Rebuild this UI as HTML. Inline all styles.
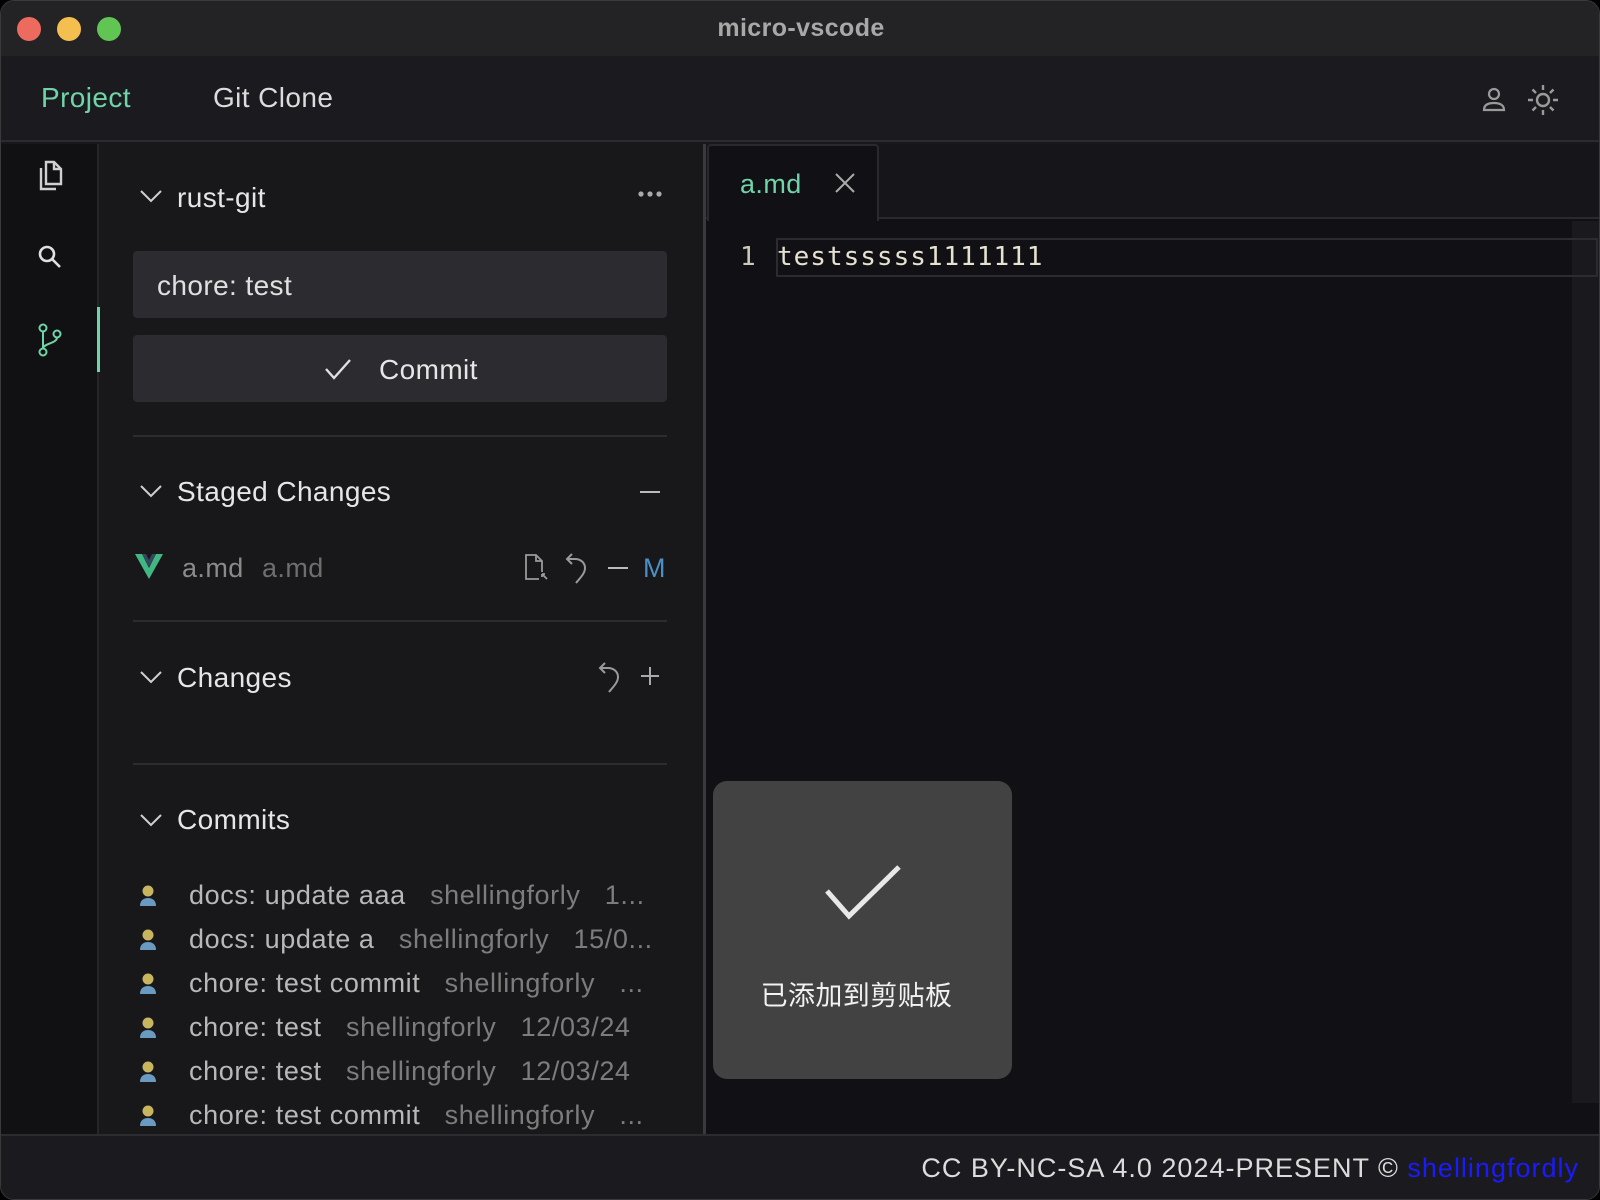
<!DOCTYPE html>
<html><head><meta charset="utf-8"><style>
*{box-sizing:border-box;margin:0;padding:0}
body{width:1600px;height:1200px;background:#000;font-family:"Liberation Sans","Noto Sans CJK SC",sans-serif;overflow:hidden;position:relative;letter-spacing:0.4px}
.win{position:absolute;left:0;top:0;width:1600px;height:1200px;border-radius:14px;overflow:hidden;background:#18181b;border:1px solid #3a3a3d}
.abs{position:absolute}
.t{position:absolute;white-space:nowrap;line-height:1}
.cm div{white-space:nowrap;overflow:hidden;height:44px}
.av{display:inline-block;width:50px;vertical-align:-2px}
.cm b{font-weight:normal;color:#b8b8b8}
</style></head><body><div class="win">
<div class="abs" style="left:0;top:0;width:1600px;height:55px;background:#232325"></div>
<div class="abs" style="left:16px;top:16px;width:24px;height:24px;border-radius:50%;background:#ec6a5e"></div>
<div class="abs" style="left:56px;top:16px;width:24px;height:24px;border-radius:50%;background:#f4bf4f"></div>
<div class="abs" style="left:96px;top:16px;width:24px;height:24px;border-radius:50%;background:#61c554"></div>
<div class="t" style="left:0;width:1600px;text-align:center;top:15px;font-size:25px;font-weight:bold;color:#a8a8a8">micro-vscode</div>
<div class="abs" style="left:0;top:55px;width:1600px;height:86px;background:#1b1b1f;border-bottom:2px solid #2c2c30"></div>
<div class="t" style="left:40px;top:83px;font-size:28px;color:#6fd4a8">Project</div>
<div class="t" style="left:212px;top:83px;font-size:28px;color:#dcdcdc">Git Clone</div>
<svg class="abs" style="left:1478px;top:84px" width="30" height="30" viewBox="0 0 30 30" fill="none" stroke="#9a9a9a" stroke-width="2.2"><circle cx="15" cy="9" r="5"/><path d="M5 25c0-5 4-7 10-7s10 2 10 7z"/></svg>
<svg class="abs" style="left:1524px;top:81px" width="36" height="36" viewBox="0 0 36 36" fill="none" stroke="#9a9a9a" stroke-width="2.4"><circle cx="18" cy="18" r="6"/><path d="M18 3v5M18 28v5M3 18h5M28 18h5M7.5 7.5l3.5 3.5M25 25l3.5 3.5M7.5 28.5l3.5-3.5M25 11l3.5-3.5"/></svg>
<div class="abs" style="left:0;top:143px;width:98px;height:990px;background:#111114;border-right:2px solid #26262a"></div>
<svg class="abs" style="left:34px;top:158px" width="30" height="34" viewBox="0 0 30 34" fill="none" stroke="#d0d0d0" stroke-width="2.4"><path d="M11 3h8l7 7v15H11z"/><path d="M19 3v7h7"/><path d="M6 9v21h15"/></svg>
<svg class="abs" style="left:35px;top:242px" width="28" height="28" viewBox="0 0 28 28" fill="none" stroke="#e0e0e0" stroke-width="2.6"><circle cx="11" cy="11" r="7"/><path d="M16 16l8 8"/></svg>
<svg class="abs" style="left:36px;top:322px" width="28" height="34" viewBox="0 0 28 34" fill="none" stroke="#6fd4a8" stroke-width="2"><circle cx="6" cy="5" r="3.5"/><circle cx="20" cy="11" r="3.5"/><circle cx="6" cy="29" r="3.5"/><path d="M6 8.5v17M20 14.5c0 6-14 6-14 11"/></svg>
<div class="abs" style="left:96px;top:306px;width:3px;height:65px;background:#6fd4a8"></div>
<div class="abs" style="left:99px;top:143px;width:603px;height:990px;background:#18181b"></div>
<div class="abs" style="left:702px;top:143px;width:3px;height:990px;background:#3a3a3e"></div>
<svg class="abs" style="left:138px;top:187px" width="24" height="16" viewBox="0 0 24 16" fill="none" stroke="#cfcfcf" stroke-width="2"><path d="M2 3l10 10 10-10"/></svg>
<div class="t" style="left:176px;top:183px;font-size:28px;color:#e6e6e6">rust-git</div>
<svg class="abs" style="left:637px;top:190px" width="24" height="6" viewBox="0 0 24 6" fill="#aaa"><circle cx="3" cy="3" r="2.6"/><circle cx="12" cy="3" r="2.6"/><circle cx="21" cy="3" r="2.6"/></svg>
<div class="abs" style="left:132px;top:250px;width:534px;height:67px;background:#2c2c30;border-radius:4px"></div>
<div class="t" style="left:156px;top:271px;font-size:28px;color:#e0e0e0">chore: test</div>
<div class="abs" style="left:132px;top:334px;width:534px;height:67px;background:#2c2c30;border-radius:4px"></div>
<svg class="abs" style="left:322px;top:355px" width="30" height="26" viewBox="0 0 30 26" fill="none" stroke="#e0e0e0" stroke-width="2.4"><path d="M3 13l8 9L27 4"/></svg>
<div class="t" style="left:378px;top:355px;font-size:28px;color:#e6e6e6">Commit</div>
<div class="abs" style="left:132px;top:434px;width:534px;height:2px;background:#2c2c30"></div>
<svg class="abs" style="left:138px;top:482px" width="24" height="16" viewBox="0 0 24 16" fill="none" stroke="#cfcfcf" stroke-width="2"><path d="M2 3l10 10 10-10"/></svg>
<div class="t" style="left:176px;top:477px;font-size:28px;color:#e6e6e6">Staged Changes</div>
<div class="abs" style="left:639px;top:490px;width:20px;height:2px;background:#bbb"></div>
<svg class="abs" style="left:133px;top:552px" width="30" height="26" viewBox="0 0 30 26"><path d="M1 1h7l7 14 7-14h7L15 26z" fill="#41b883"/><path d="M8 1h4l3 6 3-6h4l-7 13z" fill="#35495e"/></svg>
<div class="t" style="left:181px;top:554px;font-size:27px;color:#8a8a8a">a.md</div>
<div class="t" style="left:261px;top:554px;font-size:27px;color:#6e6e6e">a.md</div>
<svg class="abs" style="left:522px;top:552px" width="28" height="30" viewBox="0 0 28 30" fill="none" stroke="#9a9a9a" stroke-width="1.8"><path d="M16 26H3V2h10l6 6v11"/><path d="M13 2v6h6"/><path d="M19 21l5 5M19 21v3M19 21h3"/></svg>
<svg class="abs" style="left:563px;top:551px" width="26" height="32" viewBox="0 0 26 32" fill="none" stroke="#9a9a9a" stroke-width="2"><path d="M8 2L3 7l5 5M3 7h8c6 0 10 4 10 9 0 5-4 9-9 15"/></svg>
<div class="abs" style="left:607px;top:566px;width:20px;height:2px;background:#bbb"></div>
<div class="t" style="left:642px;top:554px;font-size:27px;color:#4a90c8">M</div>
<div class="abs" style="left:132px;top:619px;width:534px;height:2px;background:#2c2c30"></div>
<svg class="abs" style="left:138px;top:668px" width="24" height="16" viewBox="0 0 24 16" fill="none" stroke="#cfcfcf" stroke-width="2"><path d="M2 3l10 10 10-10"/></svg>
<div class="t" style="left:176px;top:663px;font-size:28px;color:#e6e6e6">Changes</div>
<svg class="abs" style="left:596px;top:660px" width="26" height="32" viewBox="0 0 26 32" fill="none" stroke="#9a9a9a" stroke-width="2"><path d="M8 2L3 7l5 5M3 7h8c6 0 10 4 10 9 0 5-4 9-9 15"/></svg>
<svg class="abs" style="left:638px;top:664px" width="22" height="22" viewBox="0 0 22 22" stroke="#aaa" stroke-width="2"><path d="M11 2v18M2 11h18"/></svg>
<div class="abs" style="left:132px;top:762px;width:534px;height:2px;background:#2c2c30"></div>
<svg class="abs" style="left:138px;top:811px" width="24" height="16" viewBox="0 0 24 16" fill="none" stroke="#cfcfcf" stroke-width="2"><path d="M2 3l10 10 10-10"/></svg>
<div class="t" style="left:176px;top:805px;font-size:28px;color:#e6e6e6">Commits</div>
<div class="cm" style="position:absolute;left:138px;top:872px;width:530px;font-size:27px;line-height:44px;color:#7c7c7c;letter-spacing:0.6px;word-spacing:0">
<div><svg class="av" width="18" height="22" viewBox="0 0 50 22"><circle cx="9" cy="7" r="5.5" fill="#c8b560"/><path d="M1 22c0-6 4-8 8-8s8 2 8 8z" fill="#6a9ac0"/></svg><b>docs: update aaa</b>&nbsp;&nbsp;&nbsp;shellingforly&nbsp;&nbsp;&nbsp;1...</div>
<div><svg class="av" width="18" height="22" viewBox="0 0 50 22"><circle cx="9" cy="7" r="5.5" fill="#c8b560"/><path d="M1 22c0-6 4-8 8-8s8 2 8 8z" fill="#6a9ac0"/></svg><b>docs: update a</b>&nbsp;&nbsp;&nbsp;shellingforly&nbsp;&nbsp;&nbsp;15/0...</div>
<div><svg class="av" width="18" height="22" viewBox="0 0 50 22"><circle cx="9" cy="7" r="5.5" fill="#c8b560"/><path d="M1 22c0-6 4-8 8-8s8 2 8 8z" fill="#6a9ac0"/></svg><b>chore: test commit</b>&nbsp;&nbsp;&nbsp;shellingforly&nbsp;&nbsp;&nbsp;...</div>
<div><svg class="av" width="18" height="22" viewBox="0 0 50 22"><circle cx="9" cy="7" r="5.5" fill="#c8b560"/><path d="M1 22c0-6 4-8 8-8s8 2 8 8z" fill="#6a9ac0"/></svg><b>chore: test</b>&nbsp;&nbsp;&nbsp;shellingforly&nbsp;&nbsp;&nbsp;12/03/24</div>
<div><svg class="av" width="18" height="22" viewBox="0 0 50 22"><circle cx="9" cy="7" r="5.5" fill="#c8b560"/><path d="M1 22c0-6 4-8 8-8s8 2 8 8z" fill="#6a9ac0"/></svg><b>chore: test</b>&nbsp;&nbsp;&nbsp;shellingforly&nbsp;&nbsp;&nbsp;12/03/24</div>
<div><svg class="av" width="18" height="22" viewBox="0 0 50 22"><circle cx="9" cy="7" r="5.5" fill="#c8b560"/><path d="M1 22c0-6 4-8 8-8s8 2 8 8z" fill="#6a9ac0"/></svg><b>chore: test commit</b>&nbsp;&nbsp;&nbsp;shellingforly&nbsp;&nbsp;&nbsp;...</div>
</div>
<div class="abs" style="left:705px;top:143px;width:895px;height:990px;background:#111115"></div>
<div class="abs" style="left:705px;top:143px;width:895px;height:75px;background:#16161a;border-bottom:2px solid #2a2a2e"></div>
<div class="abs" style="left:706px;top:143px;width:172px;height:77px;background:#111115;border:2px solid #2a2a2e;border-bottom:none;border-radius:4px 4px 0 0"></div>
<div class="t" style="left:739px;top:170px;font-size:27px;color:#6fd4a8">a.md</div>
<svg class="abs" style="left:833px;top:171px" width="22" height="22" viewBox="0 0 22 22" stroke="#aaa" stroke-width="2"><path d="M2 2l18 18M20 2L2 20"/></svg>
<div class="abs" style="left:1571px;top:220px;width:29px;height:882px;background:#1a1a1e"></div>
<div class="abs" style="left:775px;top:237px;width:822px;height:39px;border:2px solid #2c2c30"></div>
<div class="t" style="left:739px;top:243px;font-size:26px;font-family:'DejaVu Sans Mono',monospace;color:#cfcab8;letter-spacing:0">1</div>
<div class="t" style="left:776px;top:243px;font-size:26px;font-family:'DejaVu Sans Mono',monospace;color:#e6e2d0;letter-spacing:1px">testsssss1111111</div>
<div class="abs" style="left:712px;top:780px;width:299px;height:298px;background:#424242;border-radius:14px"></div>
<svg class="abs" style="left:822px;top:862px" width="80" height="60" viewBox="0 0 80 60" fill="none" stroke="#e8e8e8" stroke-width="5"><path d="M4 28l22 25L76 4"/></svg>
<div class="t" style="left:706px;width:299px;text-align:center;top:982px;font-size:27px;color:#f2f2f2">已添加到剪贴板</div>
<div class="abs" style="left:0;top:1133px;width:1600px;height:67px;background:#1b1b1f;border-top:2px solid #2c2c30"></div>
<div class="t" style="right:20px;top:1154px;font-size:27px;color:#dcdcdc;letter-spacing:1px">CC BY-NC-SA 4.0 2024-PRESENT © <span style="color:#1a1aff">shellingfordly</span></div>
</div></body></html>
